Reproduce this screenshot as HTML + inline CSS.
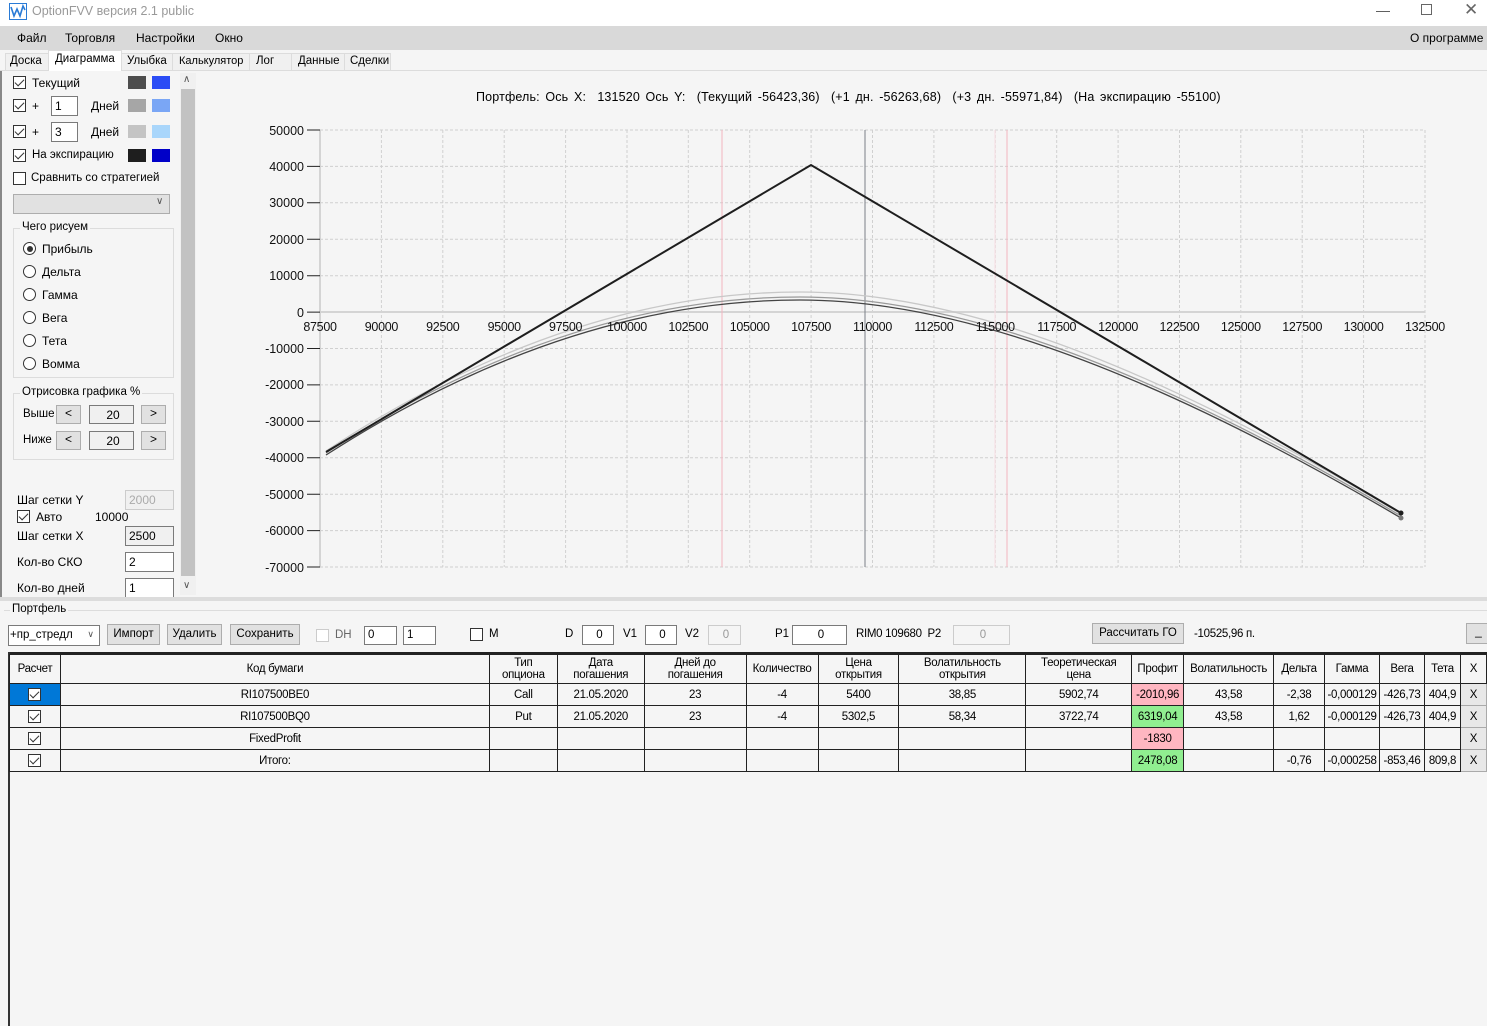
<!DOCTYPE html>
<html><head><meta charset="utf-8"><style>
*{box-sizing:border-box;margin:0;padding:0}
body{width:1487px;height:1026px;background:#f5f5f5;font-family:"Liberation Sans",sans-serif;font-size:12px;color:#000;position:relative;overflow:hidden}
.a{position:absolute;white-space:nowrap}
.cb{position:absolute;width:13px;height:13px;border:1px solid #333;background:#fff}
.cb.on::after{content:"";position:absolute;left:3px;top:0px;width:4px;height:8px;border:solid #333;border-width:0 1.3px 1.3px 0;transform:rotate(45deg)}
.rb{position:absolute;width:13px;height:13px;border:1px solid #333;border-radius:50%;background:#fff}
.inp{position:absolute;border:1px solid #7a7a7a;background:#fff;padding-left:3px;font-size:12px;line-height:18px}
.btn{position:absolute;border:1px solid #adadad;background:#e1e1e1;text-align:center;font-size:12px}
.sw{position:absolute;width:18px;height:13px}
.grp{position:absolute;border:1px solid #dcdcdc}
.grp span{position:absolute;top:-8px;left:6px;background:#f5f5f5;padding:0 2px}
table{border-collapse:collapse;position:absolute;left:9px;top:654px;font-size:11.5px;letter-spacing:-0.3px}
td{border:1px solid #222;text-align:center;height:22px;padding:0;background:#f5f5f5}
tr.h td{height:29px;line-height:12px}
.x{background:#e8e8e8;border:1px solid #aaa}
</style></head><body>
<div class="a" style="left:0;top:0;width:1487px;height:26px;background:#fff"></div>
<svg class="a" style="left:9px;top:3px" width="20" height="18"><rect x="0.5" y="0.5" width="17" height="16" fill="#fff" stroke="#2a7bd6"/><path d="M2 4 L5 13 L8 6 L11 13 L14 3 L16 7" fill="none" stroke="#2a7bd6" stroke-width="1.6"/></svg>
<div class="a" style="left:32px;top:4px;color:#999;font-size:12.5px">OptionFVV версия 2.1 public</div>
<div class="a" style="left:1376px;top:2px;color:#555;font-size:14px">—</div>
<div class="a" style="left:1421px;top:4px;width:11px;height:11px;border:1px solid #666"></div>
<div class="a" style="left:1464px;top:0px;color:#666;font-size:17px">✕</div>
<div class="a" style="left:0;top:26px;width:1487px;height:24px;background:#d9d9d9"></div>
<div class="a" style="left:17px;top:31px">Файл</div>
<div class="a" style="left:65px;top:31px">Торговля</div>
<div class="a" style="left:136px;top:31px">Настройки</div>
<div class="a" style="left:215px;top:31px">Окно</div>
<div class="a" style="left:1410px;top:31px">О программе</div>
<div class="a" style="left:0;top:70px;width:1487px;height:1px;background:#dcdcdc"></div>
<div class="a" style="left:5px;top:53px;width:386px;height:18px;border:1px solid #dcdcdc;background:#f0f0f0"></div>
<div class="a" style="left:48px;top:50px;width:74px;height:21px;background:#fff;border:1px solid #dcdcdc;border-bottom:none"></div>
<div class="a" style="left:10px;top:55px;font-size:11.5px">Доска</div>
<div class="a" style="left:55px;top:53px;font-size:11.5px">Диаграмма</div>
<div class="a" style="left:127px;top:55px;font-size:11.5px">Улыбка</div>
<div class="a" style="left:172px;top:53px;width:1px;height:18px;background:#dcdcdc"></div>
<div class="a" style="left:179px;top:55px;font-size:11px">Калькулятор</div>
<div class="a" style="left:249px;top:53px;width:1px;height:18px;background:#dcdcdc"></div>
<div class="a" style="left:256px;top:55px;font-size:11.5px">Лог</div>
<div class="a" style="left:291px;top:53px;width:1px;height:18px;background:#dcdcdc"></div>
<div class="a" style="left:298px;top:55px;font-size:11.5px">Данные</div>
<div class="a" style="left:344px;top:53px;width:1px;height:18px;background:#dcdcdc"></div>
<div class="a" style="left:350px;top:55px;font-size:11.5px">Сделки</div>
<div class="a" style="left:0;top:71px;width:2px;height:530px;background:#888"></div>
<div class="cb on" style="left:13px;top:76px"></div><div class="a" style="left:32px;top:76px">Текущий</div>
<div class="sw" style="left:128px;top:76px;background:#4d4d4d"></div><div class="sw" style="left:152px;top:76px;background:#2a4cf5"></div>
<div class="cb on" style="left:13px;top:99px"></div><div class="a" style="left:32px;top:99px">+</div>
<div class="inp" style="left:51px;top:96px;width:27px;height:20px">1</div><div class="a" style="left:91px;top:99px">Дней</div>
<div class="sw" style="left:128px;top:99px;background:#a6a6a6"></div><div class="sw" style="left:152px;top:99px;background:#7aa6f5"></div>
<div class="cb on" style="left:13px;top:125px"></div><div class="a" style="left:32px;top:125px">+</div>
<div class="inp" style="left:51px;top:122px;width:27px;height:20px">3</div><div class="a" style="left:91px;top:125px">Дней</div>
<div class="sw" style="left:128px;top:125px;background:#c4c4c4"></div><div class="sw" style="left:152px;top:125px;background:#a9d6fb"></div>
<div class="cb on" style="left:13px;top:149px"></div><div class="a" style="left:32px;top:149px;font-size:11.5px">На экспирацию</div>
<div class="sw" style="left:128px;top:149px;background:#1e1e1e"></div><div class="sw" style="left:152px;top:149px;background:#0000c8"></div>
<div class="cb" style="left:13px;top:172px"></div><div class="a" style="left:31px;top:172px;font-size:11.5px">Сравнить со стратегией</div>
<div class="a" style="left:13px;top:194px;width:157px;height:20px;border:1px solid #adadad;background:#e1e1e1"></div>
<div class="a" style="left:156px;top:196px;color:#555;font-size:10px">∨</div>
<div class="grp" style="left:13px;top:228px;width:161px;height:150px"><span style="font-size:11.5px">Чего рисуем</span></div>
<div class="rb" style="left:23px;top:242px"><div style="position:absolute;left:2.5px;top:2.5px;width:6px;height:6px;border-radius:50%;background:#333"></div></div><div class="a" style="left:42px;top:242px">Прибыль</div>
<div class="rb" style="left:23px;top:265px"></div><div class="a" style="left:42px;top:265px">Дельта</div>
<div class="rb" style="left:23px;top:288px"></div><div class="a" style="left:42px;top:288px">Гамма</div>
<div class="rb" style="left:23px;top:311px"></div><div class="a" style="left:42px;top:311px">Вега</div>
<div class="rb" style="left:23px;top:334px"></div><div class="a" style="left:42px;top:334px">Тета</div>
<div class="rb" style="left:23px;top:357px"></div><div class="a" style="left:42px;top:357px">Вомма</div>
<div class="grp" style="left:13px;top:393px;width:161px;height:67px"><span style="font-size:11.5px">Отрисовка графика %</span></div>
<div class="a" style="left:23px;top:408px;font-size:11.5px">Выше</div>
<div class="btn" style="left:56px;top:405px;width:25px;height:19px">&lt;</div>
<div class="inp" style="left:89px;top:405px;width:45px;height:19px;background:#f0f0f0;text-align:center">20</div>
<div class="btn" style="left:141px;top:405px;width:25px;height:19px">&gt;</div>
<div class="a" style="left:23px;top:434px;font-size:11.5px">Ниже</div>
<div class="btn" style="left:56px;top:431px;width:25px;height:19px">&lt;</div>
<div class="inp" style="left:89px;top:431px;width:45px;height:19px;background:#f0f0f0;text-align:center">20</div>
<div class="btn" style="left:141px;top:431px;width:25px;height:19px">&gt;</div>
<div class="a" style="left:17px;top:493px">Шаг сетки Y</div>
<div class="inp" style="left:125px;top:490px;width:49px;height:20px;color:#aaa;background:#f0f0f0;border-color:#ccc">2000</div>
<div class="cb on" style="left:17px;top:510px"></div><div class="a" style="left:36px;top:510px">Авто</div><div class="a" style="left:95px;top:510px">10000</div>
<div class="a" style="left:17px;top:529px">Шаг сетки X</div>
<div class="inp" style="left:125px;top:526px;width:49px;height:20px;background:#f0f0f0">2500</div>
<div class="a" style="left:17px;top:555px">Кол-во СКО</div>
<div class="inp" style="left:125px;top:552px;width:49px;height:20px">2</div>
<div class="a" style="left:17px;top:581px">Кол-во дней</div>
<div class="inp" style="left:125px;top:578px;width:49px;height:20px">1</div>
<div class="a" style="left:180px;top:73px;width:16px;height:522px;background:#f0f0f0"></div>
<div class="a" style="left:181px;top:89px;width:14px;height:487px;background:#c2c2c2"></div>
<div class="a" style="left:183px;top:74px;font-size:10px;color:#555">∧</div>
<div class="a" style="left:183px;top:580px;font-size:10px;color:#555">∨</div>
<div class="a" style="left:476px;top:90px;font-size:12.5px;letter-spacing:0.15px;word-spacing:2px">Портфель: Ось X:&nbsp; 131520 Ось Y:&nbsp; (Текущий -56423,36)&nbsp; (+1 дн. -56263,68)&nbsp; (+3 дн. -55971,84)&nbsp; (На экспирацию -55100)</div>
<svg class="a" style="left:0;top:0" width="1487" height="600" font-family="Liberation Sans" font-size="12.5">
<g stroke="#d0d0d0" stroke-dasharray="3,2" stroke-width="1">
<path d="M381.4 130V567M442.8 130V567M504.2 130V567M565.6 130V567M627 130V567M688.3 130V567M749.7 130V567M811.1 130V567M872.5 130V567M933.9 130V567M995.3 130V567M1056.7 130V567M1118.1 130V567M1179.5 130V567M1240.8 130V567M1302.2 130V567M1363.6 130V567M1425 130V567"/>
<path d="M320 130H1425M320 166.4H1425M320 202.8H1425M320 239.3H1425M320 275.7H1425M320 348.5H1425M320 384.9H1425M320 421.3H1425M320 457.8H1425M320 494.2H1425M320 530.6H1425M320 567H1425"/>
</g>
<path d="M320 312H1425" stroke="#d4d4d4" stroke-width="2"/>
<path d="M320 130V567" stroke="#d4d4d4" stroke-width="2"/>
<g stroke="#222" stroke-width="1"><path d="M307 130H320M307 166.4H320M307 202.8H320M307 239.3H320M307 275.7H320M307 312.1H320M307 348.5H320M307 384.9H320M307 421.3H320M307 457.8H320M307 494.2H320M307 530.6H320M307 567H320"/></g>
<path d="M722 130V567M1007 130V567" stroke="#f3b5c0" stroke-width="1"/>
<path d="M995 130V567" stroke="#f8dde2" stroke-width="1"/>
<path d="M865 130V567" stroke="#7a8088" stroke-width="1"/>
<g fill="none">
<path d="M326 451 C520 323 680 292 800 292 C920 292 1100 332 1401 514" stroke="#c8c8c8" stroke-width="1.3"/>
<path d="M326 453 C520 327 680 297 800 297 C920 297 1100 337 1401 516" stroke="#9a9a9a" stroke-width="1.3"/>
<path d="M326 455 C520 330 680 300 800 300 C920 300 1100 340 1401 518" stroke="#444" stroke-width="1.3"/>
<path d="M326 452 L811 165 L1401 513" stroke="#1e1e1e" stroke-width="2"/>
</g>
<circle cx="1401" cy="513" r="2.5" fill="#1e1e1e"/><circle cx="1401" cy="518" r="2.5" fill="#777"/>
<g text-anchor="end" fill="#111">
<text x="304" y="135">50000</text><text x="304" y="171">40000</text><text x="304" y="207">30000</text><text x="304" y="244">20000</text><text x="304" y="280">10000</text><text x="304" y="317">0</text><text x="304" y="353">-10000</text><text x="304" y="389">-20000</text><text x="304" y="426">-30000</text><text x="304" y="462">-40000</text><text x="304" y="499">-50000</text><text x="304" y="535">-60000</text><text x="304" y="572">-70000</text>
</g>
<g text-anchor="middle" fill="#111" letter-spacing="-0.3">
<text x="320" y="331">87500</text><text x="381.4" y="331">90000</text><text x="442.8" y="331">92500</text><text x="504.2" y="331">95000</text><text x="565.6" y="331">97500</text><text x="627" y="331">100000</text><text x="688.3" y="331">102500</text><text x="749.7" y="331">105000</text><text x="811.1" y="331">107500</text><text x="872.5" y="331">110000</text><text x="933.9" y="331">112500</text><text x="995.3" y="331">115000</text><text x="1056.7" y="331">117500</text><text x="1118.1" y="331">120000</text><text x="1179.5" y="331">122500</text><text x="1240.8" y="331">125000</text><text x="1302.2" y="331">127500</text><text x="1363.6" y="331">130000</text><text x="1425" y="331">132500</text>
</g>
</svg>
<div class="a" style="left:0;top:597px;width:1487px;height:4px;background:#dcdcdc"></div>
<div class="a" style="left:4px;top:610px;width:1483px;height:1px;background:#dcdcdc"></div>
<div class="a" style="left:10px;top:603px;background:#f5f5f5;padding:0 2px;font-size:11.5px">Портфель</div>
<div class="a" style="left:8px;top:625px;width:92px;height:21px;border:1px solid #7a7a7a;background:#fff;font-size:11.5px;padding:3px 0 0 1px">+пр_стредл<span style="position:absolute;right:5px;top:3px;font-size:9px;color:#555">∨</span></div>
<div class="btn" style="left:107px;top:624px;width:53px;height:21px;padding-top:3px;font-size:11.5px">Импорт</div>
<div class="btn" style="left:167px;top:624px;width:55px;height:21px;padding-top:3px;font-size:11.5px">Удалить</div>
<div class="btn" style="left:230px;top:624px;width:70px;height:21px;padding-top:3px;font-size:11.5px">Сохранить</div>
<div class="cb" style="left:316px;top:629px;border-color:#ccc"></div><div class="a" style="left:335px;top:629px;color:#666;font-size:11.5px">DH</div>
<div class="inp" style="left:364px;top:626px;width:33px;height:19px;font-size:11.5px;line-height:16px">0</div>
<div class="inp" style="left:403px;top:626px;width:33px;height:19px;font-size:11.5px;line-height:16px">1</div>
<div class="cb" style="left:470px;top:628px"></div><div class="a" style="left:489px;top:628px;font-size:11.5px">M</div>
<div class="a" style="left:565px;top:628px;font-size:11.5px">D</div>
<div class="inp" style="left:582px;top:625px;width:32px;height:20px;text-align:center;font-size:11.5px">0</div>
<div class="a" style="left:623px;top:628px;font-size:11.5px">V1</div>
<div class="inp" style="left:645px;top:625px;width:32px;height:20px;text-align:center;font-size:11.5px">0</div>
<div class="a" style="left:685px;top:628px;font-size:11.5px">V2</div>
<div class="inp" style="left:708px;top:625px;width:33px;height:20px;text-align:center;color:#999;border-color:#ccc;background:#f5f5f5;font-size:11.5px">0</div>
<div class="a" style="left:775px;top:628px;font-size:11.5px">P1</div>
<div class="inp" style="left:792px;top:625px;width:55px;height:20px;text-align:center;font-size:11.5px">0</div>
<div class="a" style="left:856px;top:628px;font-size:11.5px;letter-spacing:-0.3px">RIM0 109680&nbsp; P2</div>
<div class="inp" style="left:953px;top:625px;width:57px;height:20px;text-align:center;color:#999;border-color:#ccc;background:#f5f5f5;font-size:11.5px">0</div>
<div class="btn" style="left:1092px;top:623px;width:92px;height:21px;padding-top:3px;font-size:11.5px">Рассчитать ГО</div>
<div class="a" style="left:1194px;top:628px;font-size:11.5px;letter-spacing:-0.3px">-10525,96 п.</div>
<div class="btn" style="left:1466px;top:623px;width:25px;height:21px">_</div>
<div class="a" style="left:8px;top:652px;width:1479px;height:2px;background:#222"></div>
<div class="a" style="left:8px;top:652px;width:2px;height:374px;background:#333"></div>
<table>
<colgroup><col style="width:51px"><col style="width:430px"><col style="width:68px"><col style="width:87px"><col style="width:102px"><col style="width:72px"><col style="width:81px"><col style="width:127px"><col style="width:106px"><col style="width:52px"><col style="width:90px"><col style="width:51px"><col style="width:55px"><col style="width:45px"><col style="width:36px"><col style="width:26px"></colgroup>
<tr class="h"><td>Расчет</td><td>Код бумаги</td><td>Тип<br>опциона</td><td>Дата<br>погашения</td><td>Дней до<br>погашения</td><td>Количество</td><td>Цена<br>открытия</td><td>Волатильность<br>открытия</td><td>Теоретическая<br>цена</td><td>Профит</td><td>Волатильность</td><td>Дельта</td><td>Гамма</td><td>Вега</td><td>Тета</td><td>X</td></tr>
<tr><td style="background:#0078d7"><div class="cb on" style="position:relative;display:inline-block;vertical-align:middle"></div></td><td>RI107500BE0</td><td>Call</td><td>21.05.2020</td><td>23</td><td>-4</td><td>5400</td><td>38,85</td><td>5902,74</td><td style="background:#ffb6c1">-2010,96</td><td>43,58</td><td>-2,38</td><td>-0,000129</td><td>-426,73</td><td>404,9</td><td class="x">X</td></tr>
<tr><td><div class="cb on" style="position:relative;display:inline-block;vertical-align:middle"></div></td><td>RI107500BQ0</td><td>Put</td><td>21.05.2020</td><td>23</td><td>-4</td><td>5302,5</td><td>58,34</td><td>3722,74</td><td style="background:#90ee90">6319,04</td><td>43,58</td><td>1,62</td><td>-0,000129</td><td>-426,73</td><td>404,9</td><td class="x">X</td></tr>
<tr><td><div class="cb on" style="position:relative;display:inline-block;vertical-align:middle"></div></td><td>FixedProfit</td><td></td><td></td><td></td><td></td><td></td><td></td><td></td><td style="background:#ffb6c1">-1830</td><td></td><td></td><td></td><td></td><td></td><td class="x">X</td></tr>
<tr><td><div class="cb on" style="position:relative;display:inline-block;vertical-align:middle"></div></td><td>Итого:</td><td></td><td></td><td></td><td></td><td></td><td></td><td></td><td style="background:#90ee90">2478,08</td><td></td><td>-0,76</td><td>-0,000258</td><td>-853,46</td><td>809,8</td><td class="x">X</td></tr>
</table>
</body></html>
